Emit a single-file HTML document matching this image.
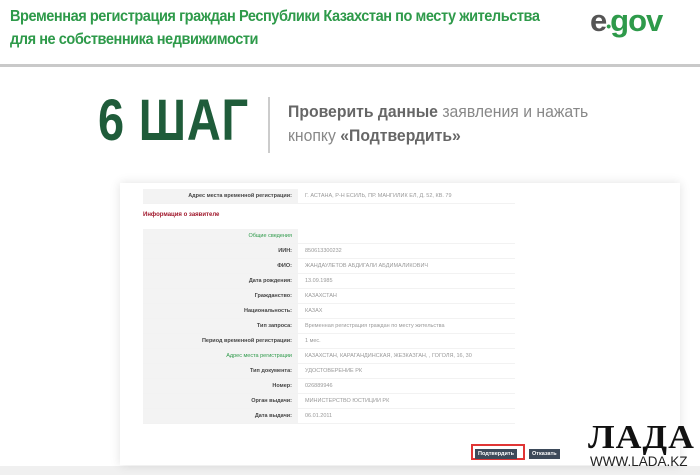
<!DOCTYPE html>
<html><head><meta charset="utf-8"><style>
body{margin:0;width:700px;height:475px;overflow:hidden;background:#fff;font-family:"Liberation Sans",sans-serif;position:relative}
.t{position:absolute;left:10px;top:5px;color:#2e9a4a;font-weight:bold;font-size:16px;line-height:23px;letter-spacing:-0.5px;transform:scaleX(0.91);transform-origin:left;white-space:nowrap}
.logo{position:absolute;left:590px;top:3px;font-size:31px;font-weight:bold;color:#555;letter-spacing:-1px}
.logo b{color:#2e9a4a}
.line{position:absolute;left:0;top:64px;width:700px;height:3px;background:#c9c9c9}
.bot{position:absolute;left:0;top:466px;width:700px;height:9px;background:#f0f0f0}
.step{position:absolute;left:98px;top:88px;font-size:58px;font-weight:bold;color:#1f5c3a;transform:scaleX(0.81);transform-origin:left;line-height:66px;letter-spacing:1px}
.vr{position:absolute;left:268px;top:97px;width:2px;height:56px;background:#ccc}
.st{position:absolute;left:288px;top:100px;font-size:16.5px;color:#888;line-height:24px;transform:scaleX(0.955);transform-origin:left;white-space:nowrap}
.st b{color:#666}
.card{position:absolute;left:120px;top:183px;width:560px;height:282px;background:#fff;box-shadow:0 0 10px rgba(0,0,0,.12)}
.row{position:absolute;left:23px;height:14px;width:372px;font-size:5.5px;line-height:14px;color:#333;border-bottom:1px solid #f2f2f2}
.row .l{position:absolute;left:0;width:155px;height:14px;background:#f3f3f3;text-align:right;font-weight:bold;color:#444}
.row .l span{padding-right:6px}
.row .v{position:absolute;left:162px;color:#999}
.info{position:absolute;left:23px;top:29px;font-size:6px;color:#a0172b;font-weight:bold}
.btn{position:absolute;top:266px;height:10px;background:#3d4a5a;color:#fff;font-size:5.5px;line-height:10px;padding:0 3px;font-weight:bold}
.red{position:absolute;left:351px;top:261px;width:54px;height:16px;border:2px solid #e03535;box-sizing:border-box}
.lada{position:absolute;left:588px;top:420px;font-family:"Liberation Serif",serif;font-weight:bold;font-size:34px;letter-spacing:1px;color:#111;line-height:36px;transform:scaleX(1.05);transform-origin:left}
.www{position:absolute;left:590px;top:454px;font-size:13.5px;color:#222}
</style></head><body>
<div class="bot"></div>
<div class="t">Временная регистрация граждан Республики Казахстан по месту жительства<br>для не собственника недвижимости</div>
<div class="logo">e<b style="font-size:14px">•</b><b>gov</b></div>
<div class="line"></div>
<div class="step">6 ШАГ</div>
<div class="vr"></div>
<div class="st"><b>Проверить данные</b> заявления и нажать<br>кнопку <b>«Подтвердить»</b></div>
<div class="card">
<div class="row" style="top:6px"><div class="l"><span>Адрес места временной регистрации:</span></div><div class="v">Г. АСТАНА, Р-Н ЕСИЛЬ, ПР. МАНГИЛИК ЕЛ, Д. 52, КВ. 79</div></div>
<div class="info">Информация о заявителе</div>
<div class="row" style="top:46px"><div class="l"><span style="color:#2e9a4a;font-weight:normal">Общие сведения</span></div></div>
<div class="row" style="top:61px"><div class="l"><span>ИИН:</span></div><div class="v">850613300232</div></div>
<div class="row" style="top:76px"><div class="l"><span>ФИО:</span></div><div class="v">ЖАНДАУЛЕТОВ АБДИГАЛИ АБДИМАЛИКОВИЧ</div></div>
<div class="row" style="top:91px"><div class="l"><span>Дата рождения:</span></div><div class="v">13.09.1985</div></div>
<div class="row" style="top:106px"><div class="l"><span>Гражданство:</span></div><div class="v">КАЗАХСТАН</div></div>
<div class="row" style="top:121px"><div class="l"><span>Национальность:</span></div><div class="v">КАЗАХ</div></div>
<div class="row" style="top:136px"><div class="l"><span>Тип запроса:</span></div><div class="v">Временная регистрация граждан по месту жительства</div></div>
<div class="row" style="top:151px"><div class="l"><span>Период временной регистрации:</span></div><div class="v">1 мес.</div></div>
<div class="row" style="top:166px"><div class="l"><span style="color:#2e9a4a;font-weight:normal">Адрес места регистрации</span></div><div class="v">КАЗАХСТАН, КАРАГАНДИНСКАЯ, ЖЕЗКАЗГАН, , ГОГОЛЯ, 16, 30</div></div>
<div class="row" style="top:181px"><div class="l"><span>Тип документа:</span></div><div class="v">УДОСТОВЕРЕНИЕ РК</div></div>
<div class="row" style="top:196px"><div class="l"><span>Номер:</span></div><div class="v">026889946</div></div>
<div class="row" style="top:211px"><div class="l"><span>Орган выдачи:</span></div><div class="v">МИНИСТЕРСТВО ЮСТИЦИИ РК</div></div>
<div class="row" style="top:226px"><div class="l"><span>Дата выдачи:</span></div><div class="v">06.01.2011</div></div>
<div class="red"></div>
<div class="btn" style="left:355px">Подтвердить</div>
<div class="btn" style="left:409px">Отказать</div>
</div>
<div class="lada">ЛАДА</div>
<div class="www">WWW.LADA.KZ</div>
</body></html>
